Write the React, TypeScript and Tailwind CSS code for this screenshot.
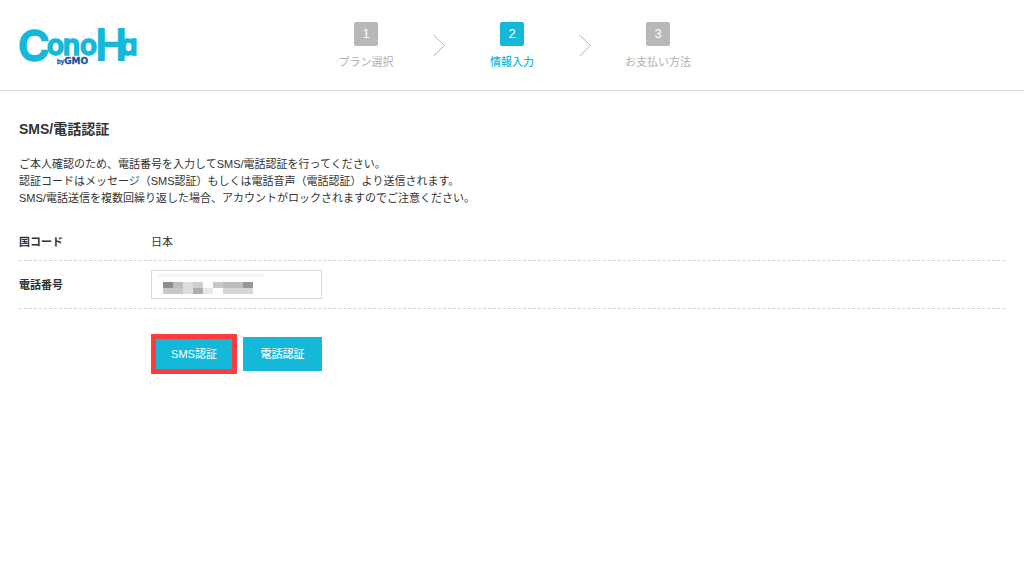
import React from "react";

// static data
const steps = [
  { number: 1, label: "プラン選択", active: false },
  { number: 2, label: "情報入力", active: true },
  { number: 3, label: "お支払い方法", active: false },
];

// shades of the masked phone number, two rows of blocks
const maskRows = [
  ["#8f8f8f", "#bdbdbd", "#dedede", "#cfcfcf", "#ffffff", "#c8c8c8", "#bdbdbd", "#bdbdbd", "#969696"],
  ["#c8c8c8", "#c8c8c8", "#dedede", "#adadad", "#e8e8e8", "#ffffff", "#d6d6d6", "#d6d6d6", "#d6d6d6"],
];

function Logo() {
  return (
    <svg
      width="124"
      height="44"
      viewBox="0 0 124 44"
      role="img"
      aria-label="ConoHa by GMO"
      className="overflow-visible font-['Inter',sans-serif] font-semibold"
    >
      <text y="35" fill="#14b8d8" stroke="#14b8d8" strokeWidth="1.6">
        <tspan x="-1" fontSize="43" strokeWidth="1.6">C</tspan>
        <tspan x="28" y="29" fontSize="28">o</tspan>
        <tspan x="44" y="29" fontSize="28">n</tspan>
        <tspan x="61" y="29" fontSize="28">o</tspan>
        <tspan x="76" y="35" fontSize="46" className="font-['Liberation_Sans_Narrow','Roboto',sans-serif] font-bold" strokeWidth="0">H</tspan>
        <tspan x="101" y="29" fontSize="28" className="[font-feature-settings:'cv11']">a</tspan>
      </text>
      <text x="38" y="38" fill="#1d4fa3" stroke="#1d4fa3" strokeWidth="0.3">
        <tspan fontSize="6">by</tspan>
        <tspan fontSize="9" className="font-['DejaVu_Sans',sans-serif] font-bold">GMO</tspan>
      </text>
    </svg>
  );
}

function Chevron() {
  return (
    <svg width="14" height="24" viewBox="0 0 14 24" fill="none" stroke="#b4b4b4" aria-hidden="true">
      <path d="M1.5 1 L12.5 11.5 L1.5 22" />
    </svg>
  );
}

export default function App() {
  return (
    <div className="min-h-screen bg-white text-[11px] leading-4 text-[#333] font-['Liberation_Sans','Noto_Sans_CJK_JP',sans-serif]">
      <header className="grid grid-cols-[1fr_auto_1fr] items-start border-b border-[#dcdcdc] px-[19px] pb-5 pt-[22px]">
        <a href="#" className="mt-1 justify-self-start">
          <Logo />
        </a>
        <ol className="flex items-center gap-[18px]">
          {steps.map((step, index) => (
            <React.Fragment key={step.number}>
              {index > 0 && (
                <li aria-hidden="true">
                  <Chevron />
                </li>
              )}
              <li
                className={`flex w-24 flex-col items-center gap-2 ${
                  step.active ? "font-medium text-[#14b8d8]" : "text-[#b0b0b0]"
                }`}
              >
                <span
                  className={`flex size-6 items-center justify-center rounded-xs text-[13px] font-normal text-white ${
                    step.active ? "bg-[#14b8d8]" : "bg-[#b8b8b8]"
                  }`}
                >
                  {step.number}
                </span>
                <span>{step.label}</span>
              </li>
            </React.Fragment>
          ))}
        </ol>
      </header>

      <main className="px-[19px] pt-7">
        <h1 className="text-sm font-bold">SMS/電話認証</h1>
        <p className="mt-[17px] leading-[17px]">
          ご本人確認のため、電話番号を入力してSMS/電話認証を行ってください。
          <br />
          認証コードはメッセージ（SMS認証）もしくは電話音声（電話認証）より送信されます。
          <br />
          SMS/電話送信を複数回繰り返した場合、アカウントがロックされますのでご注意ください。
        </p>

        <form onSubmit={(e) => e.preventDefault()}>
          <dl className="mt-[17px]">
            <div className="flex items-center border-b border-dashed border-[#d4d4d4] py-[10px]">
              <dt className="w-[132px] font-bold">国コード</dt>
              <dd>日本</dd>
            </div>
            <div className="flex items-center border-b border-dashed border-[#d4d4d4] py-[9px]">
              <dt className="w-[132px] font-bold">
                <label htmlFor="phone">電話番号</label>
              </dt>
              <dd className="relative">
                <input
                  id="phone"
                  type="tel"
                  className="block h-[29px] w-[171px] border border-[#d9d9d9] px-3 outline-none"
                />
                <span className="absolute left-[7px] top-1 h-[3px] w-[106px] bg-[#f7f7f7]" />
                <span className="absolute left-3 top-3 grid grid-cols-9">
                  {maskRows.flat().map((color, index) => (
                    <span key={index} className="h-[6px] w-[10px]" style={{ backgroundColor: color }} />
                  ))}
                </span>
              </dd>
            </div>
          </dl>

          <div className="ml-[132px] mt-[25px] flex items-center gap-[6px]">
            <button type="submit" className="h-10 w-[86px] border-5 border-[#ff3b3f] bg-[#14b8d8] text-white">
              SMS認証
            </button>
            <button type="button" className="h-[34px] w-[79px] bg-[#14b8d8] font-medium text-white">
              電話認証
            </button>
          </div>
        </form>
      </main>
    </div>
  );
}
